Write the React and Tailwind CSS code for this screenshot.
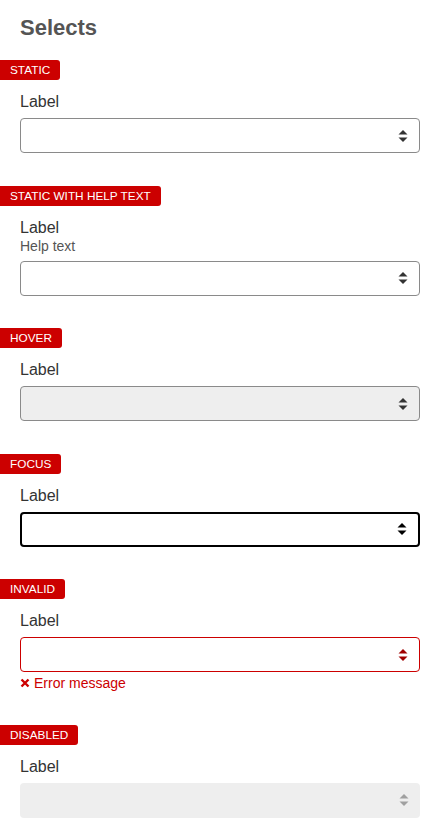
import React from "react";

const Arrows = ({ color }) => (
  <svg width="12" height="14" viewBox="0 0 12 14" className="absolute right-[10px] top-1/2 -translate-y-1/2 pointer-events-none">
    <path d="M1.5 5.5 L6 1 L10.5 5.5 Z" fill={color} />
    <path d="M1.5 8.5 L6 13 L10.5 8.5 Z" fill={color} />
  </svg>
);

const Badge = ({ children }) => (
  <div className="flex w-fit items-center h-5 px-[10px] bg-[#cc0000] text-white text-[11.8px] leading-5 rounded-r-[3px]">
    {children}
  </div>
);

const variants = {
  static: { box: "border border-[#8a8a8a] bg-white", arrow: "#333" },
  hover: { box: "border border-[#8a8a8a] bg-[#eeeeee]", arrow: "#333" },
  focus: { box: "border-2 border-black bg-white", arrow: "#000" },
  invalid: { box: "border border-[#cc0000] bg-white", arrow: "#a00000" },
  disabled: { box: "bg-[#eeeeee]", arrow: "#a0a0a0" },
};

const Field = ({ title, help, variant = "static", error, last }) => {
  const v = variants[variant];
  return (
    <div className={last ? "mb-8" : "mb-[32.5px]"}>
      <Badge>{title}</Badge>
      <div className="px-5 pt-3">
        <div className="text-[16px] leading-5 text-[#333]">Label</div>
        {help && <div className="text-[14px] leading-[17px] text-[#555]">Help text</div>}
        <div className={`relative mt-[6px] h-[35px] rounded-[4px] ${v.box}`}>
          <Arrows color={v.arrow} />
        </div>
        {error && (
          <div className="flex items-center gap-[4px] mt-[2px] text-[14px] leading-[18px] text-[#cc0000]">
            <svg width="10" height="10" viewBox="0 0 10 10">
              <path d="M1.5 1.5 L8.5 8.5 M8.5 1.5 L1.5 8.5" stroke="#cc0000" strokeWidth="2.4" />
            </svg>
            Error message
          </div>
        )}
      </div>
    </div>
  );
};

export default function App() {
  return (
    <div className="w-[440px] min-h-[840px] bg-white pt-[14px]" style={{ fontFamily: '"Liberation Sans", Arial, sans-serif' }}>
      <h1 className="px-5 text-[22px] leading-7 font-bold text-[#555] mb-[18px]">Selects</h1>
      <Field title="STATIC" />
      <Field title="STATIC WITH HELP TEXT" help />
      <Field title="HOVER" variant="hover" />
      <Field title="FOCUS" variant="focus" />
      <Field title="INVALID" variant="invalid" error />
      <Field title="DISABLED" variant="disabled" last />
    </div>
  );
}
